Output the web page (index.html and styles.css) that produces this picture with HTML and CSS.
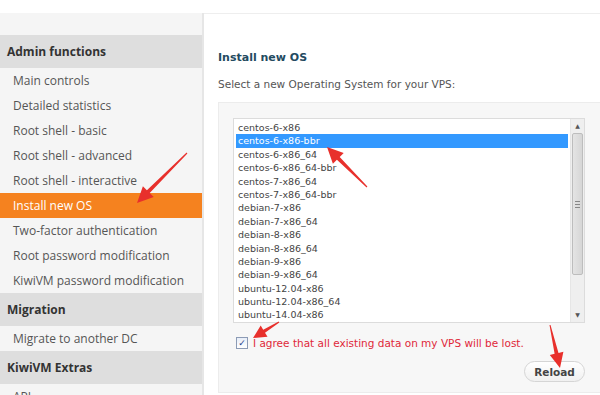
FILE: index.html
```html
<!DOCTYPE html>
<html lang="en">

<head>
  <meta charset="UTF-8">
  <title>KiwiVM - Install new OS</title>
  <link rel="stylesheet" href="styles.css">
</head>

<body>
  <div class="page">
    <div class="sidebar">
      <div class="group">Admin functions</div>
      <div class="item">Main controls</div>
      <div class="item">Detailed statistics</div>
      <div class="item">Root shell - basic</div>
      <div class="item">Root shell - advanced</div>
      <div class="item">Root shell - interactive</div>
      <div class="item active">Install new OS</div>
      <div class="item">Two-factor authentication</div>
      <div class="item">Root password modification</div>
      <div class="item">KiwiVM password modification</div>
      <div class="group">Migration</div>
      <div class="item">Migrate to another DC</div>
      <div class="group">KiwiVM Extras</div>
      <div class="item">API</div>
    </div>

    <div class="content">
      <h2 class="title">Install new OS</h2>
      <p class="hint">Select a new Operating System for your VPS:</p>
      <div class="box">
        <div class="listbox">
          <div class="options">
            <div class="opt">centos-6-x86</div>
            <div class="opt selected">centos-6-x86-bbr</div>
            <div class="opt">centos-6-x86_64</div>
            <div class="opt">centos-6-x86_64-bbr</div>
            <div class="opt">centos-7-x86_64</div>
            <div class="opt">centos-7-x86_64-bbr</div>
            <div class="opt">debian-7-x86</div>
            <div class="opt">debian-7-x86_64</div>
            <div class="opt">debian-8-x86</div>
            <div class="opt">debian-8-x86_64</div>
            <div class="opt">debian-9-x86</div>
            <div class="opt">debian-9-x86_64</div>
            <div class="opt">ubuntu-12.04-x86</div>
            <div class="opt">ubuntu-12.04-x86_64</div>
            <div class="opt">ubuntu-14.04-x86</div>
          </div>
          <div class="scrollbar">
            <div class="arrow">&#9650;</div>
            <div class="track">
              <div class="thumb"><span class="grip"></span></div>
            </div>
            <div class="arrow">&#9660;</div>
          </div>
        </div>

        <label class="agree">
          <span class="check">&#10003;</span>
          I agree that all existing data on my VPS will be lost.
        </label>

        <div class="actions">
          <button class="btn">Reload</button>
        </div>
      </div>
    </div>
  </div>

  <!-- red arrows from the screenshot -->
  <svg class="marks" width="600" height="395" viewBox="0 0 600 395">
    <polygon points="187.4,153.4 149.7,193.1 153.7,197.1 137,203 142.9,186.3 146.9,190.3 186.6,152.6" />
    <polygon points="367.4,186.6 339.7,156.9 343.7,152.9 327,147 332.9,163.7 336.9,159.7 366.6,187.4" />
    <polygon points="279.3,322.4 265.0,332.7 267.5,336.8 253,338 260.7,325.6 263.2,329.7 278.7,321.6" />
    <polygon points="549.5,325.1 554.6,353.8 549.8,355.0 560,368 563.4,351.8 558.5,353.0 550.5,324.9" />
  </svg>
</body>

</html>
```

FILE: styles.css
```css
body {
  margin: 0;
  height: 395px;
  overflow: hidden;
  background: #fff;
  position: relative;
}

.page {
  display: flex;
  padding-top: 13px;
  height: 100%;
  box-sizing: border-box;
}

/* 左邊選單 */
.sidebar {
  width: 202px;
  flex: none;
  background: #f5f5f5;
  border-right: 2px solid #e6e6e6;
  padding-top: 22px;
  font-family: "Open Sans", sans-serif;
  font-size: 12px;
  color: #555;
}

.group {
  background: #dedede;
  color: #333;
  font-weight: bold;
  height: 33px;
  line-height: 33px;
  padding-left: 7px;
}

.item {
  height: 25px;
  line-height: 25px;
  padding-left: 13px;
}

.item.active {
  background: #f5821f;
  color: #fff;
}

/* 右邊內容 */
.content {
  flex: 1;
  border-top: 1px solid #eee;
  padding: 36px 0 0 14px;
  font-family: "DejaVu Sans", Verdana, sans-serif;
  min-width: 0;
}

.title {
  margin: 0;
  font-size: 11px;
  color: #234a5f;
  line-height: 16px;
}

.hint {
  margin: 10px 0 0;
  font-size: 10.5px;
  color: #555;
  line-height: 16px;
}

.box {
  margin-top: 10px;
  margin-right: -20px;
  background: #f7f7f7;
  border: 1px solid #ececec;
  padding: 15px 34px 10px 14px;
}

.listbox {
  display: flex;
  width: 352px;
  height: 205px;
  box-sizing: border-box;
  background: #fff;
  border: 1px solid #dcdcdc;
}

.options {
  flex: 1;
  padding: 2px 2px 0 2px;
  font-size: 9.5px;
  color: #444;
}

.opt {
  height: 13.4px;
  line-height: 13.4px;
  padding-left: 2px;
}

.opt.selected {
  background: #3399ff;
  color: #fff;
}

.scrollbar {
  width: 13px;
  display: flex;
  flex-direction: column;
  background: #efefef;
  border-left: 1px solid #e6e6e6;
}

.arrow {
  height: 14px;
  line-height: 14px;
  font-size: 6px;
  text-align: center;
  color: #555;
}

.track {
  flex: 1;
}

.thumb {
  height: 140px;
  margin: 0 1px;
  background: linear-gradient(to right, #e4e4e4, #d6d6d6);
  border: 1px solid #bdbdbd;
  border-radius: 2px;
  display: flex;
  align-items: center;
  justify-content: center;
}

.grip {
  width: 5px;
  height: 5px;
  border-top: 1px solid #888;
  border-bottom: 1px solid #888;
  position: relative;
}

.grip::after {
  content: '';
  position: absolute;
  left: 0;
  right: 0;
  top: 2px;
  border-top: 1px solid #888;
}

.agree {
  display: flex;
  align-items: center;
  gap: 5px;
  margin-top: 14px;
  padding-left: 3px;
  font-size: 10.5px;
  color: #e0283a;
}

.check {
  width: 10px;
  height: 10px;
  border: 1px solid #8c9bb5;
  background: linear-gradient(#e8eef8, #fff);
  color: #2a3f8a;
  font-size: 9px;
  line-height: 10px;
  text-align: center;
  font-weight: bold;
}

.actions {
  display: flex;
  justify-content: flex-end;
  margin-top: 12px;
}

.btn {
  font-family: "DejaVu Sans", Verdana, sans-serif;
  font-size: 10.5px;
  font-weight: bold;
  color: #444;
  width: 61px;
  height: 21px;
  padding: 0;
  background: linear-gradient(#fff, #f0f0f0);
  border: 1px solid #d5d5d5;
  border-radius: 11px;
}

/* 紅色箭頭 */
.marks {
  position: absolute;
  left: 0;
  top: 0;
  pointer-events: none;
  fill: #e8302c;
}
```
